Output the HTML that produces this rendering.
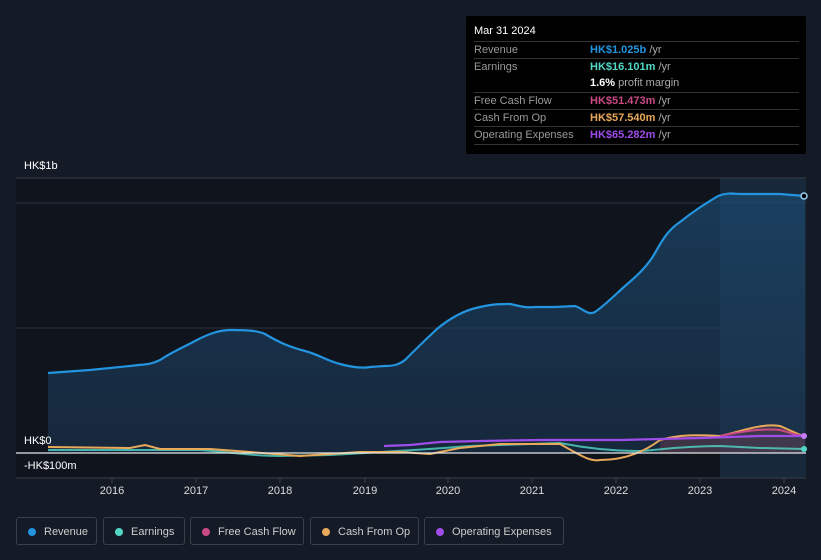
<!DOCTYPE html>
<html><head><meta charset="utf-8"><style>
body{margin:0;width:821px;height:560px;background:#151b26;font-family:"Liberation Sans",sans-serif;overflow:hidden;position:relative}
.tip{position:absolute;left:466px;top:16px;width:340px;height:138px;background:#000;border-radius:2px}
.tip .d{position:absolute;left:8px;top:9px;color:#fff;font-size:11px}
.row{position:absolute;left:8px;width:325px;height:17px;border-top:1px solid #333;font-size:11px;color:#999;line-height:17px}
.row b{position:absolute;left:116px;font-weight:bold}
.row span.u{color:#aaa;font-weight:normal}
.lbl{position:absolute;color:#fff;font-size:11px}
.yr{position:absolute;top:485px;color:#ddd;font-size:11px;width:40px;text-align:center}
.leg{position:absolute;top:517px;height:28px;border:1px solid #3a404a;border-radius:3px;font-size:11px;color:#ccc;line-height:28px;box-sizing:border-box;padding-left:27px;white-space:nowrap}
.leg i{position:absolute;left:11px;top:10px;width:8px;height:8px;border-radius:50%}
</style></head><body>
<svg width="821" height="560" style="position:absolute;left:0;top:0">
<defs><linearGradient id="g" x1="0" y1="0" x2="0" y2="1"><stop offset="0" stop-color="#1b4a70" stop-opacity=".7"/><stop offset="1" stop-color="#1b3550" stop-opacity=".6"/></linearGradient></defs>
<rect x="16" y="178" width="704" height="300" fill="#10141d"/>
<rect x="720" y="178" width="86" height="300" fill="#17283a"/>
<line x1="16" y1="178" x2="806" y2="178" stroke="#3a404a"/>
<line x1="16" y1="203" x2="806" y2="203" stroke="#2e3440"/>
<line x1="16" y1="328" x2="806" y2="328" stroke="#2e3440"/>
<line x1="16" y1="478" x2="806" y2="478" stroke="#3a404a"/>
<path d="M112,478v5M196,478v5M280,478v5M365,478v5M448,478v5M532,478v5M616,478v5M700,478v5M784,478v5" stroke="#3a404a"/>
<path d="M48,373 L90,370 L130,366 C145,364 150,365 160,360 C172,352 182,348 195,341 C210,333 220,330 232,330 C250,330 258,331 265,334 C280,343 290,347 305,351 C320,355 325,360 340,364 C355,368 365,368 370,367 L385,366 C395,366 400,364 405,360 C415,350 425,340 437,329 C450,318 465,310 480,307 C492,304 500,304 510,304 C520,306 525,308 535,307 L555,307 L575,306 C582,308 588,316 595,312 C605,305 615,295 625,286 C638,275 645,268 652,258 C660,245 665,232 680,222 C695,210 705,204 718,196 C728,192 735,194 740,194 L780,194 L805,196 L805,453 L48,453 Z" fill="url(#g)"/>
<path d="M48,373 L90,370 L130,366 C145,364 150,365 160,360 C172,352 182,348 195,341 C210,333 220,330 232,330 C250,330 258,331 265,334 C280,343 290,347 305,351 C320,355 325,360 340,364 C355,368 365,368 370,367 L385,366 C395,366 400,364 405,360 C415,350 425,340 437,329 C450,318 465,310 480,307 C492,304 500,304 510,304 C520,306 525,308 535,307 L555,307 L575,306 C582,308 588,316 595,312 C605,305 615,295 625,286 C638,275 645,268 652,258 C660,245 665,232 680,222 C695,210 705,204 718,196 C728,192 735,194 740,194 L780,194 L805,196" fill="none" stroke="#2394df" stroke-width="2.2"/>
<path d="M660,440 C680,434 700,435 720,436 C740,432 760,422 780,426 C795,432 800,435 805,437 L805,453 L660,453 Z" fill="#8a4a5a" opacity=".35"/>
<path d="M48,450 L200,450 C230,452 250,456 280,456 L330,455 C380,452 420,450 470,446 L560,443 C580,447 610,451 640,451 C660,450 680,446 720,446 L760,448 L805,449" fill="none" stroke="#52d7c6" stroke-width="2" opacity=".8"/>
<path d="M48,447 L130,448 L145,445 L160,449 L210,449 L250,452 L300,456 L360,452 L400,452 L430,454 L460,448 L500,444 L560,444 C580,455 590,462 600,460 C620,460 640,455 660,440 C680,434 700,435 720,436 C740,432 760,423 780,426 L805,437" fill="none" stroke="#e9a95a" stroke-width="2"/>
<path d="M720,436 C740,432 760,428 780,430 L805,437" fill="none" stroke="#c94a85" stroke-width="2"/>
<path d="M384,446 L410,445 L440,442 L480,441 L540,440 L620,440 L700,438 L760,436 L805,436" fill="none" stroke="#9e4de8" stroke-width="2.2"/>
<line x1="16" y1="453" x2="806" y2="453" stroke="#e6e6e6" stroke-width="1.2"/>
<circle cx="804" cy="196" r="3" fill="#000" stroke="#9ed0f5" stroke-width="1.5"/>
<circle cx="804" cy="449" r="3" fill="#52d7c6"/>
<circle cx="804" cy="436" r="3" fill="#c87cf5"/>
</svg>
<div class="lbl" style="left:24px;top:160px">HK$1b</div>
<div class="lbl" style="left:24px;top:435px">HK$0</div>
<div class="lbl" style="left:24px;top:460px">-HK$100m</div>
<div class="yr" style="left:92px">2016</div><div class="yr" style="left:176px">2017</div><div class="yr" style="left:260px">2018</div><div class="yr" style="left:345px">2019</div><div class="yr" style="left:428px">2020</div><div class="yr" style="left:512px">2021</div><div class="yr" style="left:596px">2022</div><div class="yr" style="left:680px">2023</div><div class="yr" style="left:764px">2024</div>
<div class="tip"><div class="d">Mar 31 2024</div>
<div class="row" style="top:25px">Revenue<b style="color:#2394df">HK$1.025b <span class="u">/yr</span></b></div>
<div class="row" style="top:42px">Earnings<b style="color:#52d7c6">HK$16.101m <span class="u">/yr</span></b></div>
<div class="row" style="top:59px;border-top:none"><b style="color:#fff">1.6% <span class="u">profit margin</span></b></div>
<div class="row" style="top:76px">Free Cash Flow<b style="color:#c94a85">HK$51.473m <span class="u">/yr</span></b></div>
<div class="row" style="top:93px">Cash From Op<b style="color:#e9a95a">HK$57.540m <span class="u">/yr</span></b></div>
<div class="row" style="top:110px">Operating Expenses<b style="color:#9e4de8">HK$65.282m <span class="u">/yr</span></b></div>
<div class="row" style="top:128px;height:0"></div>
</div>
<div class="leg" style="left:16px;width:81px"><i style="background:#2394df"></i>Revenue</div>
<div class="leg" style="left:103px;width:82px"><i style="background:#52d7c6"></i>Earnings</div>
<div class="leg" style="left:190px;width:114px"><i style="background:#c94a85"></i>Free Cash Flow</div>
<div class="leg" style="left:310px;width:109px"><i style="background:#e9a95a"></i>Cash From Op</div>
<div class="leg" style="left:424px;width:140px"><i style="background:#9e4de8"></i>Operating Expenses</div>
</body></html>
